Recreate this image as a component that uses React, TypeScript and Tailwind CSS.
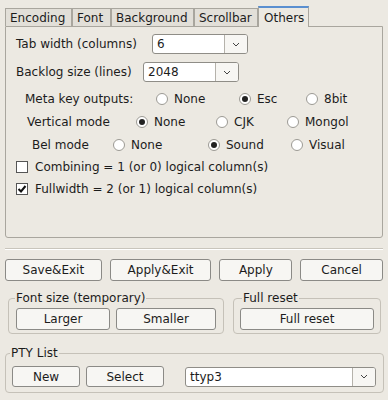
import React from 'react';

const tabs = [
  { label: 'Encoding', w: 'w-[67px]' },
  { label: 'Font', w: 'w-[39px]' },
  { label: 'Background', w: 'w-[83px]' },
  { label: 'Scrollbar', w: 'w-[64px]' },
];

function Radio({ checked, label, w }: { checked?: boolean; label: string; w: string }) {
  return (
    <div className={`flex items-center ${w}`}>
      <span className="w-[12px] h-[12px] rounded-full border border-[#9c9a94] bg-white flex items-center justify-center">
        {checked && <span className="w-[6px] h-[6px] rounded-full bg-[#222]" />}
      </span>
      <span className="ml-[6px]">{label}</span>
    </div>
  );
}

function Check({ checked, label }: { checked?: boolean; label: string }) {
  return (
    <div className="flex items-center h-[22px] pl-[10px]">
      <span className="w-[12px] h-[12px] border border-[#555] bg-white flex items-center justify-center">
        {checked && (
          <svg width="10" height="10" viewBox="0 0 10 10">
            <path d="M1.5 5 L4 7.5 L8.5 2" fill="none" stroke="#111" strokeWidth="2" />
          </svg>
        )}
      </span>
      <span className="ml-[7px]">{label}</span>
    </div>
  );
}

function Combo({ value, w }: { value: string; w: string }) {
  return (
    <div className={`flex h-[20px] ${w} border border-[#8f8d87] rounded-[3px] bg-white overflow-hidden`}>
      <div className="flex-1 flex items-center pl-[4px]">{value}</div>
      <div className="w-[23px] border-l border-[#b5b2ab] bg-[#f7f6f3] flex items-center justify-center">
        <svg width="8" height="5" viewBox="0 0 8 5">
          <path d="M1 1 L4 4 L7 1" fill="none" stroke="#444" strokeWidth="1" />
        </svg>
      </div>
    </div>
  );
}

function Btn({ label, w, h = 'h-[22px]' }: { label: string; w: string; h?: string }) {
  return (
    <button className={`${w} ${h} border border-[#8b8a86] rounded-[3px] bg-[#f7f6f3] flex items-center justify-center`}>
      {label}
    </button>
  );
}

export default function App() {
  return (
    <div className="w-[388px] h-[400px] bg-[#ece9e2] font-['DejaVu_Sans',sans-serif] text-[12px] text-[#1c1c1c] overflow-hidden">
      {/* notebook */}
      <div className="pt-[5px] px-[5px]">
        <div className="flex items-end h-[21px]">
          {tabs.map(t => (
            <div
              key={t.label}
              className={`${t.w} h-[18px] border border-b-0 border-[#a9a69e] bg-[#e2dfd8] flex items-center pl-[4px] overflow-hidden whitespace-nowrap`}
            >
              {t.label}
            </div>
          ))}
          <div className="w-[51px] h-[21px] border border-b-0 border-[#a9a69e] border-t-2 border-t-[#5a8fd0] bg-[#ece9e2] flex items-center pl-[5px] relative top-[1px]">
            Others
          </div>
        </div>
        <div className="h-[212px] border border-[#a9a69e] rounded-b-[3px] pt-[7px]">
          <div className="flex items-center h-[20px] pl-[10px]">
            <span className="w-[136px]">Tab width (columns)</span>
            <Combo value="6" w="w-[96px]" />
          </div>
          <div className="flex items-center h-[20px] pl-[10px] mt-[8px]">
            <span className="w-[127px]">Backlog size (lines)</span>
            <Combo value="2048" w="w-[96px]" />
          </div>
          <div className="flex items-center h-[23px] pl-[19px] mt-[5px]">
            <span className="w-[131px]">Meta key outputs:</span>
            <Radio label="None" w="w-[83px]" />
            <Radio label="Esc" checked w="w-[67px]" />
            <Radio label="8bit" w="w-[60px]" />
          </div>
          <div className="flex items-center h-[23px] pl-[21px]">
            <span className="w-[109px]">Vertical mode</span>
            <Radio label="None" checked w="w-[80px]" />
            <Radio label="CJK" w="w-[71px]" />
            <Radio label="Mongol" w="w-[80px]" />
          </div>
          <div className="flex items-center h-[23px] pl-[26px]">
            <span className="w-[81px]">Bel mode</span>
            <Radio label="None" w="w-[95px]" />
            <Radio label="Sound" checked w="w-[83px]" />
            <Radio label="Visual" w="w-[70px]" />
          </div>
          <Check label="Combining = 1 (or 0) logical column(s)" />
          <Check checked label="Fullwidth = 2 (or 1) logical column(s)" />
        </div>
      </div>

      <div className="mx-[5px] mt-[10px] border-t border-[#c9c5bc] border-b border-b-white" />

      <div className="flex px-[5px] mt-[9px] gap-[8px]">
        <Btn label="Save&Exit" w="w-[97px]" />
        <Btn label="Apply&Exit" w="w-[102px]" />
        <Btn label="Apply" w="w-[73px]" />
        <Btn label="Cancel" w="w-[83px]" />
      </div>

      <div className="flex mt-[10px] pl-[8px]">
        <fieldset className="w-[214px] border border-[#c5c1b8] rounded-[4px] px-[7px] pb-[3px]">
          <legend className="ml-[-1px] px-[1px] leading-[14px]">Font size (temporary)</legend>
          <div className="flex gap-[6px] mt-[3px]">
            <Btn label="Larger" w="w-[94px]" />
            <Btn label="Smaller" w="w-[100px]" />
          </div>
        </fieldset>
        <fieldset className="ml-[9px] w-[148px] border border-[#c5c1b8] rounded-[4px] px-[6px] pb-[3px]">
          <legend className="ml-[2px] px-[1px] leading-[14px]">Full reset</legend>
          <div className="mt-[3px]">
            <Btn label="Full reset" w="w-[134px]" />
          </div>
        </fieldset>
      </div>

      <fieldset className="mx-[5px] mt-[12px] border border-[#c5c1b8] rounded-[4px] pl-[6px] pr-[7px] pb-[5px]">
        <legend className="ml-[-2px] px-[1px] leading-[14px]">PTY List</legend>
        <div className="flex items-center mt-[6px]">
          <Btn label="New" w="w-[68px]" h="h-[21px]" />
          <div className="ml-[6px]">
            <Btn label="Select" w="w-[78px]" h="h-[21px]" />
          </div>
          <div className="ml-[21px]">
            <Combo value="ttyp3" w="w-[191px]" />
          </div>
        </div>
      </fieldset>
    </div>
  );
}
